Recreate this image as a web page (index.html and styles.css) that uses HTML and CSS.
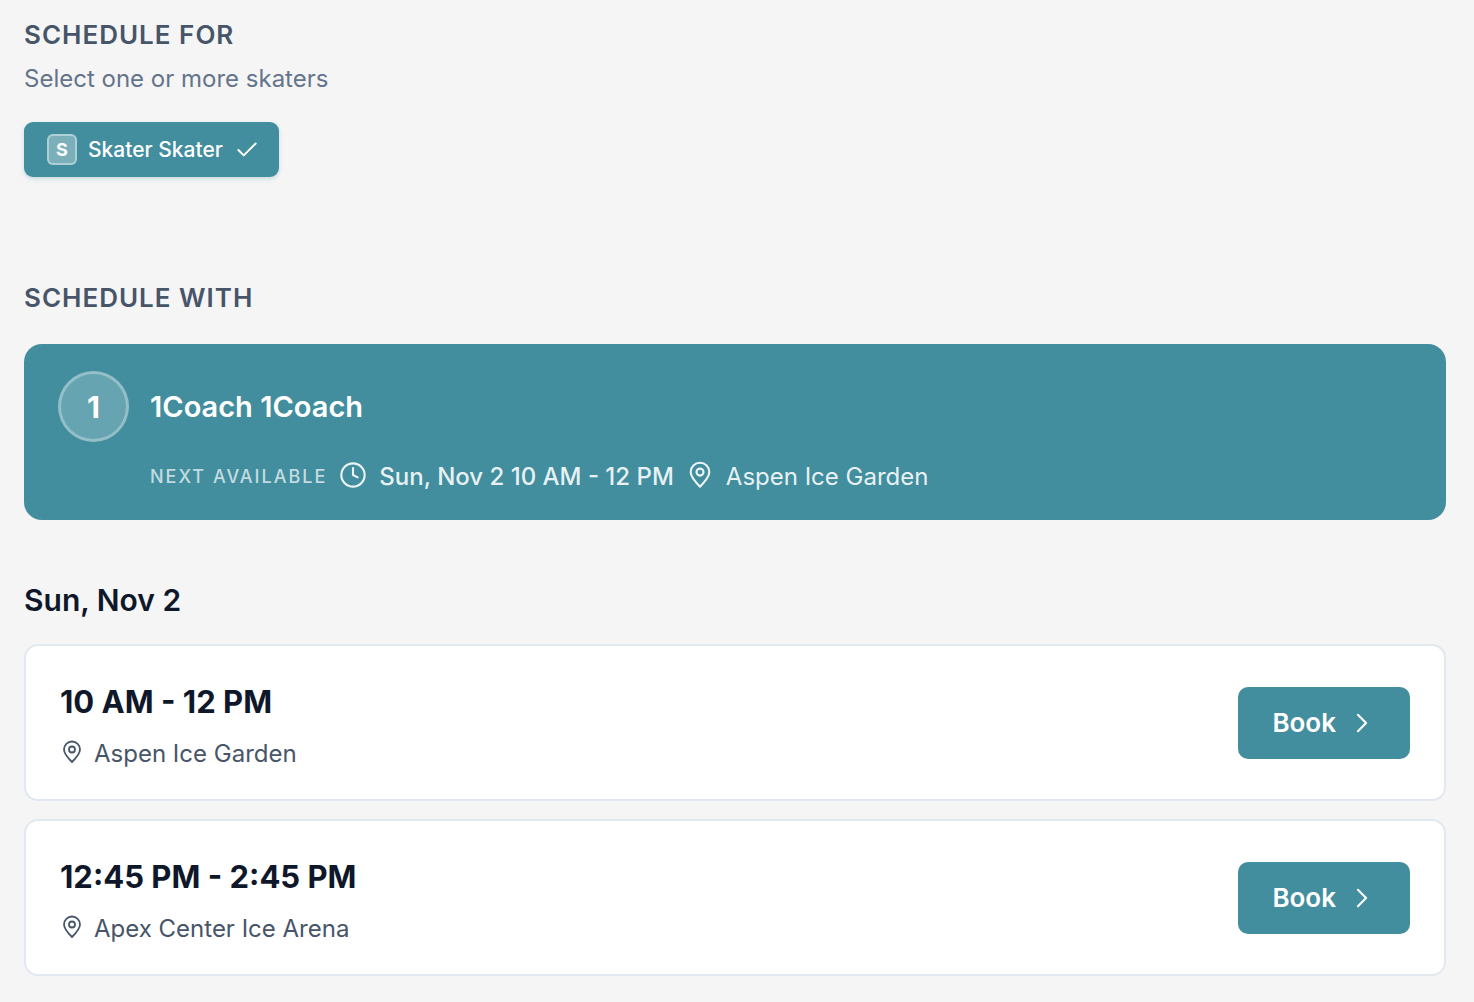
FILE: index.html
```html
<!DOCTYPE html>
<html lang="en">
<head>
  <meta charset="UTF-8">
  <meta name="viewport" content="width=device-width, initial-scale=1.0">
  <title>Schedule</title>
  <link rel="stylesheet" href="styles.css">
</head>
<body>
  <svg class="icon-defs" aria-hidden="true">
    <symbol id="icon-pin" viewBox="0 0 24 24">
      <path d="M20 9.500c0 4.500-5 9.500-8 12.500-3-3-8-8-8-12.500a8 8 0 0 1 16 0z"/>
      <circle cx="12" cy="9.500" r="3"/>
    </symbol>
    <symbol id="icon-clock" viewBox="0 0 24 24">
      <circle cx="12" cy="12" r="10"/>
      <path d="M12 6v6l4 2"/>
    </symbol>
    <symbol id="icon-chevron" viewBox="0 0 24 24">
      <path d="M8.500 19l7-7-7-7"/>
    </symbol>
    <symbol id="icon-check" viewBox="0 0 24 24">
      <path d="M20 6L9 17l-5-5"/>
    </symbol>
  </svg>

  <main class="page">
    <section class="skaters">
      <h2 class="section-title">Schedule For</h2>
      <p class="section-hint">Select one or more skaters</p>
      <button type="button" class="skater-chip" aria-pressed="true">
        <span class="chip-avatar">S</span>
        <span class="chip-name">Skater Skater</span>
        <svg class="icon icon-check"><use href="#icon-check"/></svg>
      </button>
    </section>

    <section class="coaches">
      <h2 class="section-title">Schedule With</h2>
      <button type="button" class="coach-card" aria-pressed="true">
        <span class="coach-avatar">1</span>
        <span class="coach-name">1Coach 1Coach</span>
        <span class="coach-next">
          <span class="next-label">Next Available</span>
          <svg class="icon icon-md"><use href="#icon-clock"/></svg>
          <span class="next-time">Sun, Nov 2 10 AM - 12 PM</span>
          <svg class="icon icon-md"><use href="#icon-pin"/></svg>
          <span>Aspen Ice Garden</span>
        </span>
      </button>
    </section>

    <section class="slots">
      <h3 class="day-title">Sun, Nov 2</h3>
      <div class="slot">
        <div class="slot-info">
          <div class="slot-time">10 AM - 12 PM</div>
          <div class="slot-place">
            <svg class="icon icon-sm"><use href="#icon-pin"/></svg>
            <span>Aspen Ice Garden</span>
          </div>
        </div>
        <button type="button" class="book-btn">
          Book
          <svg class="icon icon-md"><use href="#icon-chevron"/></svg>
        </button>
      </div>
      <div class="slot">
        <div class="slot-info">
          <div class="slot-time">12:45 PM - 2:45 PM</div>
          <div class="slot-place">
            <svg class="icon icon-sm"><use href="#icon-pin"/></svg>
            <span>Apex Center Ice Arena</span>
          </div>
        </div>
        <button type="button" class="book-btn">
          Book
          <svg class="icon icon-md"><use href="#icon-chevron"/></svg>
        </button>
      </div>
    </section>
  </main>
</body>
</html>
```
FILE: styles.css
```css
* {
  box-sizing: border-box;
}
body {
  margin: 0;
  background-color: #f5f5f5;
  color: #0f172a;
  font-family: Inter, "Liberation Sans", sans-serif;
  font-size: 24px;
}
h2, h3, p {
  margin: 0;
}
button {
  border: 0;
  background: #428e9e;
  color: white;
  font-family: inherit;
  cursor: pointer;
}
.page {
  padding: 16px 28px 24px 24px;
}
.icon-defs {
  position: absolute;
  width: 0;
  height: 0;
}
.icon {
  flex: none;
  fill: none;
  stroke: currentColor;
  stroke-width: 1.8;
  stroke-linecap: round;
  stroke-linejoin: round;
}
.icon-sm {
  width: 24px;
  height: 24px;
}
.icon-md {
  width: 28px;
  height: 28px;
}
.icon-check {
  width: 26px;
  height: 26px;
}

.section-title {
  color: #475569;
  font-size: 26px;
  font-weight: 600;
  line-height: 38px;
  letter-spacing: 1px;
  text-transform: uppercase;
}
.section-hint {
  margin-top: 6px;
  color: #64748b;
  line-height: 38px;
}
.skater-chip {
  display: flex;
  align-items: center;
  gap: 11px;
  margin-top: 24px;
  padding: 12px 19px 12px 23px;
  border-radius: 9px;
  box-shadow: 0 2px 4px rgba(66, 142, 158, 0.25);
  font-size: 21px;
  font-weight: 500;
}
.chip-avatar {
  display: flex;
  align-items: center;
  justify-content: center;
  width: 30px;
  height: 31px;
  border: 2px solid rgba(255, 255, 255, 0.4);
  border-radius: 6px;
  background: rgba(255, 255, 255, 0.3);
  font-size: 18px;
  font-weight: 700;
}

.coaches {
  margin-top: 102px;
}
.coach-card {
  display: grid;
  grid-template-columns: auto 1fr;
  align-items: center;
  column-gap: 21px;
  row-gap: 16px;
  width: 100%;
  margin-top: 27px;
  padding: 27px 34px 25px;
  border-radius: 18px;
  font-size: 24px;
  text-align: left;
}
.coach-avatar {
  display: flex;
  align-items: center;
  justify-content: center;
  width: 71px;
  height: 71px;
  border: 3px solid rgba(255, 255, 255, 0.3);
  border-radius: 50%;
  background: rgba(255, 255, 255, 0.2);
  font-size: 30px;
  font-weight: 700;
}
.coach-name {
  font-size: 29px;
  font-weight: 600;
}
.coach-next {
  grid-column: 2;
  display: flex;
  align-items: center;
  gap: 12px;
  color: rgba(255, 255, 255, 0.9);
  line-height: 37px;
}
.coach-next .icon,
.slot-place .icon {
  margin-bottom: 3px;
}
.next-label {
  color: rgba(255, 255, 255, 0.7);
  font-size: 18px;
  font-weight: 500;
  letter-spacing: 2px;
  text-transform: uppercase;
}
.next-time {
  font-weight: 500;
}

.slots {
  display: flex;
  flex-direction: column;
  gap: 18px;
  margin-top: 60px;
}
.day-title {
  margin-bottom: 5px;
  font-size: 30px;
  font-weight: 600;
  line-height: 41px;
}
.slot {
  display: flex;
  align-items: center;
  justify-content: space-between;
  padding: 28px 34px;
  border: 2px solid #e2e8f0;
  border-radius: 14px;
  background: white;
}
.slot-time {
  font-size: 31px;
  font-weight: 700;
  line-height: 56px;
}
.slot-place {
  display: flex;
  align-items: center;
  gap: 10px;
  margin-top: 6px;
  color: #475569;
  line-height: 35px;
}
.book-btn {
  display: flex;
  align-items: center;
  gap: 12px;
  height: 72px;
  padding: 0 34px;
  border-radius: 10px;
  font-size: 26px;
  font-weight: 600;
}
```
